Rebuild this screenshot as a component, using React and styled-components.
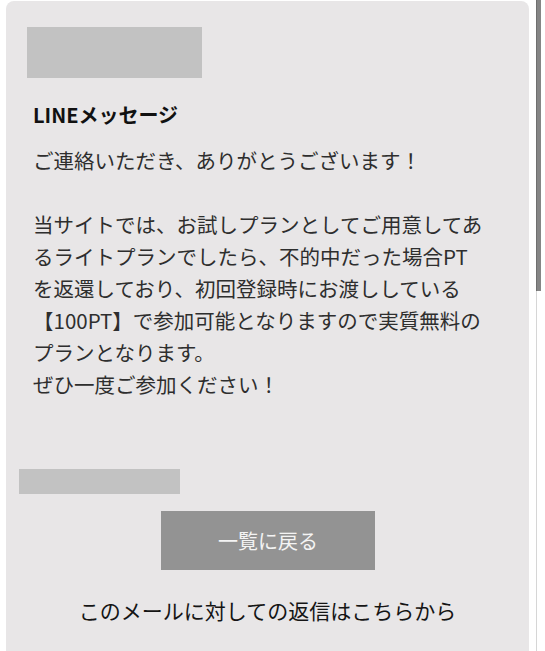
import React from 'react'
import styled, { createGlobalStyle } from 'styled-components'

const GlobalStyle = createGlobalStyle`
    body {
        margin      : 0;
        background  : #ffffff;
        font-family : "Noto Sans CJK JP", "Noto Sans", sans-serif;
    }
`;

const Screen = styled.div`
    display     : flex;
    align-items : flex-start;
    height      : 651px;
    overflow    : hidden;
    padding     : 1px 0 0 6px;
    box-sizing  : border-box;
`;

const Card = styled.main`
    width           : 523px;
    height          : 700px;
    flex-shrink     : 0;
    background      : #e8e6e7;
    border-radius   : 8px 8px 0 0;
    padding-top     : 26px;
    box-sizing      : border-box;
    display         : flex;
    flex-direction  : column;
`;

// grey blocks that stand in for hidden content
const Placeholder = styled.div`
    width       : ${p => p.w}px;
    height      : ${p => p.h}px;
    margin-left : ${p => p.left}px;
    margin-top  : ${p => p.top || 0}px;
    background  : #c2c2c2;
`;

const Title = styled.h2`
    margin      : 23px 0 0 27px;
    font-size   : 20px;
    line-height : 28px;
    font-weight : 700;
    color       : #111111;
`;

const Body = styled.p`
    margin          : 15px 0 0 27px;
    font-size       : 20.5px;
    line-height     : 32px;
    color           : #2e2e2e;
    white-space     : nowrap;
`;

const Button = styled.button`
    align-self  : center;
    margin      : 17px 0 0 1px;
    width       : 214px;
    height      : 59px;
    border      : none;
    background  : #939393;
    color       : #f4f4f4;
    font-family : inherit;
    font-size   : 20px;
    cursor      : pointer;
`;

const ReplyLink = styled.p`
    margin      : 25px 0 0;
    text-align  : center;
    font-size   : 21px;
    line-height : 30px;
    color       : #151515;
`;

const Scrollbar = styled.div`
    margin-left     : 7px;
    margin-top      : -1px;
    width           : 5px;
    display         : flex;
    flex-direction  : column;
    flex-shrink     : 0;
`;

const Thumb = styled.div`
    height      : 291px;
    background  : #858585;
    border-left : 1px solid #6f6f6f;
`;

const Rail = styled.div`
    height      : 360px;
    width       : 1px;
    background  : #d6d6d6;
`;

export default function App() {
    return (
        <>
            <GlobalStyle />
            <Screen>
                <Card>
                    <Placeholder w={175} h={51} left={21} />
                    <Title>LINEメッセージ</Title>
                    <Body>
                        ご連絡いただき、ありがとうございます！<br />
                        <br />
                        当サイトでは、お試しプランとしてご用意してあ<br />
                        るライトプランでしたら、不的中だった場合PT<br />
                        を返還しており、初回登録時にお渡ししている<br />
                        【100PT】で参加可能となりますので実質無料の<br />
                        プランとなります。<br />
                        ぜひ一度ご参加ください！
                    </Body>
                    <Placeholder w={161} h={25} left={13} top={69} />
                    <Button>一覧に戻る</Button>
                    <ReplyLink>このメールに対しての返信はこちらから</ReplyLink>
                </Card>
                <Scrollbar>
                    <Thumb />
                    <Rail />
                </Scrollbar>
            </Screen>
        </>
    )
}
